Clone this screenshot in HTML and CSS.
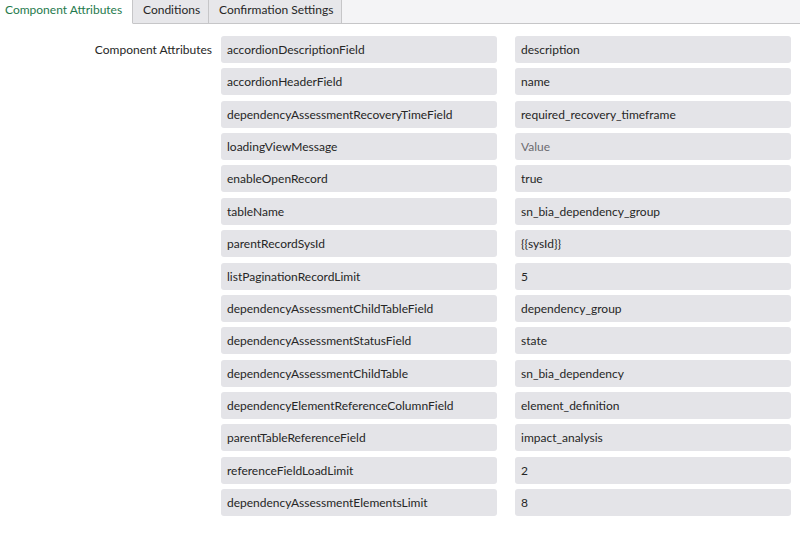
FILE: index.html
```html
<!DOCTYPE html>
<html>
<head>
<meta charset="utf-8">
<link rel="stylesheet" href="styles.css">
</head>
<body>
<div class="tabs">
  <div class="tab active">Component Attributes</div>
  <div class="tab">Conditions</div>
  <div class="tab">Confirmation Settings</div>
  <div class="tab-fill"></div>
</div>
<div class="content">
  <div class="label">Component Attributes</div>
  <div class="rows">
    <div class="row"><div class="field">accordionDescriptionField</div><div class="field">description</div></div>
    <div class="row"><div class="field">accordionHeaderField</div><div class="field">name</div></div>
    <div class="row"><div class="field">dependencyAssessmentRecoveryTimeField</div><div class="field">required_recovery_timeframe</div></div>
    <div class="row"><div class="field">loadingViewMessage</div><div class="field placeholder">Value</div></div>
    <div class="row"><div class="field">enableOpenRecord</div><div class="field">true</div></div>
    <div class="row"><div class="field">tableName</div><div class="field">sn_bia_dependency_group</div></div>
    <div class="row"><div class="field">parentRecordSysId</div><div class="field">{{sysId}}</div></div>
    <div class="row"><div class="field">listPaginationRecordLimit</div><div class="field">5</div></div>
    <div class="row"><div class="field">dependencyAssessmentChildTableField</div><div class="field">dependency_group</div></div>
    <div class="row"><div class="field">dependencyAssessmentStatusField</div><div class="field">state</div></div>
    <div class="row"><div class="field">dependencyAssessmentChildTable</div><div class="field">sn_bia_dependency</div></div>
    <div class="row"><div class="field">dependencyElementReferenceColumnField</div><div class="field">element_definition</div></div>
    <div class="row"><div class="field">parentTableReferenceField</div><div class="field">impact_analysis</div></div>
    <div class="row"><div class="field">referenceFieldLoadLimit</div><div class="field">2</div></div>
    <div class="row"><div class="field">dependencyAssessmentElementsLimit</div><div class="field">8</div></div>
  </div>
</div>
</body>
</html>
```
FILE: styles.css
```css
html, body {
  margin: 0;
  padding: 0;
  background: #ffffff;
}
body {
  font-family: Lato, "Noto Sans", sans-serif;
  font-size: 12px;
  color: #262626;
  width: 800px;
  height: 545px;
  overflow: hidden;
}
.tabs {
  display: flex;
  height: 23px;
  background: #f4f4f6;
  border-bottom: 1px solid #c6c6c8;
}
.tab {
  box-sizing: border-box;
  height: 24px;
  line-height: 19px;
  padding: 0 10px;
  background: #e7e7ea;
  border-right: 1px solid #c6c6c8;
  border-bottom: 1px solid #c6c6c8;
  color: #262626;
  white-space: nowrap;
}
.tab.active {
  width: 133px;
  padding: 0 0 0 5px;
  background: #ffffff;
  color: #1f7a4d;
  border-bottom-color: #ffffff;
}
.tab:nth-child(2) { width: 76px; }
.tab:nth-child(3) { width: 133px; }
.tab-fill { flex: 1; }
.content {
  display: flex;
  padding-top: 12px;
}
.label {
  box-sizing: border-box;
  flex: none;
  width: 221px;
  padding-right: 9px;
  text-align: right;
  line-height: 28px;
}
.rows {
  display: flex;
  flex-direction: column;
  gap: 5.36px;
}
.row {
  display: flex;
  gap: 18px;
}
.field {
  box-sizing: border-box;
  width: 276px;
  height: 27px;
  line-height: 28px;
  padding: 0 6px;
  background: #e4e4e8;
  border-radius: 3px;
  white-space: nowrap;
  overflow: hidden;
}
.field.placeholder {
  color: #6b6b70;
}
```
